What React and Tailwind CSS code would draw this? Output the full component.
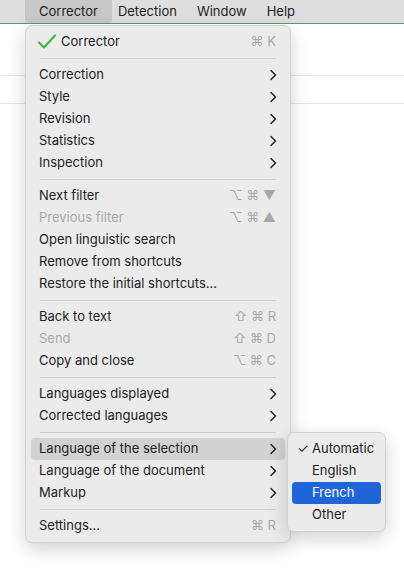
import React from 'react'

const font = { fontFamily: '"Inter", "Liberation Sans", sans-serif' }

const menu = [
  { label: 'Corrector', check: true, sc: '⌘ K' },
  'sep',
  { label: 'Correction', sub: true },
  { label: 'Style', sub: true },
  { label: 'Revision', sub: true },
  { label: 'Statistics', sub: true },
  { label: 'Inspection', sub: true },
  'sep',
  { label: 'Next filter', sc: '⌥ ⌘ ▼' },
  { label: 'Previous filter', sc: '⌥ ⌘ ▲', disabled: true },
  { label: 'Open linguistic search' },
  { label: 'Remove from shortcuts' },
  { label: 'Restore the initial shortcuts…' },
  'sep',
  { label: 'Back to text', sc: '⇧ ⌘ R' },
  { label: 'Send', sc: '⇧ ⌘ D', disabled: true },
  { label: 'Copy and close', sc: '⌥ ⌘ C' },
  'sep',
  { label: 'Languages displayed', sub: true },
  { label: 'Corrected languages', sub: true },
  'sep',
  { label: 'Language of the selection', sub: true, active: true },
  { label: 'Language of the document', sub: true },
  { label: 'Markup', sub: true },
  'sep',
  { label: 'Settings…', sc: '⌘ R' },
]

function Chevron() {
  return (
    <svg width="8" height="12" viewBox="0 0 8 12" className="text-[#2a2a2a]">
      <path d="M2 1.5 L6.5 6 L2 10.5" fill="none" stroke="currentColor" strokeWidth="1.6" strokeLinecap="round" strokeLinejoin="round" />
    </svg>
  )
}

export default function App() {
  return (
    <div className="relative w-[404px] h-[581px] bg-white overflow-hidden text-[13px] text-[#222]" style={font}>
      <div className="flex h-6 bg-[#dedede] border-b border-[#5a9a72] items-stretch pl-[25px]">
        <div className="px-[14px] flex items-center bg-[#c8c8c8] rounded-b-[3px]">Corrector</div>
        <div className="px-[6px] flex items-center">Detection</div>
        <div className="px-[14px] flex items-center">Window</div>
        <div className="px-[6px] flex items-center">Help</div>
      </div>
      <div className="h-[52px] border-b border-[#e6e6e6]" />
      <div className="h-[28px] border-b border-[#e6e6e6]" />

      <div className="absolute left-[25px] top-[25px] w-[266px] py-[5px] bg-[#ebebeb] rounded-[7px] border border-[#d2d2d2] shadow-[0_6px_18px_rgba(0,0,0,0.18)]">
        {menu.map((m, i) =>
          m === 'sep' ? (
            <div key={i} className="h-[11px] flex items-center px-[14px]">
              <div className="h-px w-full bg-[#d0d0d0]" />
            </div>
          ) : (
            <div
              key={i}
              className={`h-[22px] mx-[5px] px-[8px] rounded-[4px] flex items-center ${m.active ? 'bg-[#d2d2d2]' : ''} ${m.disabled ? 'text-[#a8a8a8]' : ''}`}
            >
              {m.check && (
                <svg width="20" height="16" viewBox="0 0 20 16" className="-ml-[2px] mr-[4px]">
                  <path d="M2 8.5 L7 13.5 L18 1.5" fill="none" stroke="#3fb54a" strokeWidth="2.2" strokeLinecap="round" strokeLinejoin="round" />
                </svg>
              )}
              <span className="flex-1">{m.label}</span>
              {m.sc && <span className="text-[#a8a8a8] whitespace-pre mr-[1px]">{m.sc}</span>}
              {m.sub && <Chevron />}
            </div>
          )
        )}
      </div>

      <div className="absolute left-[287px] top-[432px] w-[99px] py-[5px] bg-[#ebebeb] rounded-[7px] border border-[#d2d2d2] shadow-[0_6px_18px_rgba(0,0,0,0.18)]">
        {['Automatic', 'English', 'French', 'Other'].map((l, i) => (
          <div key={l} className={`h-[22px] mx-[4px] rounded-[4px] flex items-center ${l === 'French' ? 'bg-[#2065d8] text-white' : ''}`}>
            <span className="w-[20px] text-center pl-[2px]">{i === 0 ? '✓' : ''}</span>
            <span>{l}</span>
          </div>
        ))}
      </div>
    </div>
  )
}
